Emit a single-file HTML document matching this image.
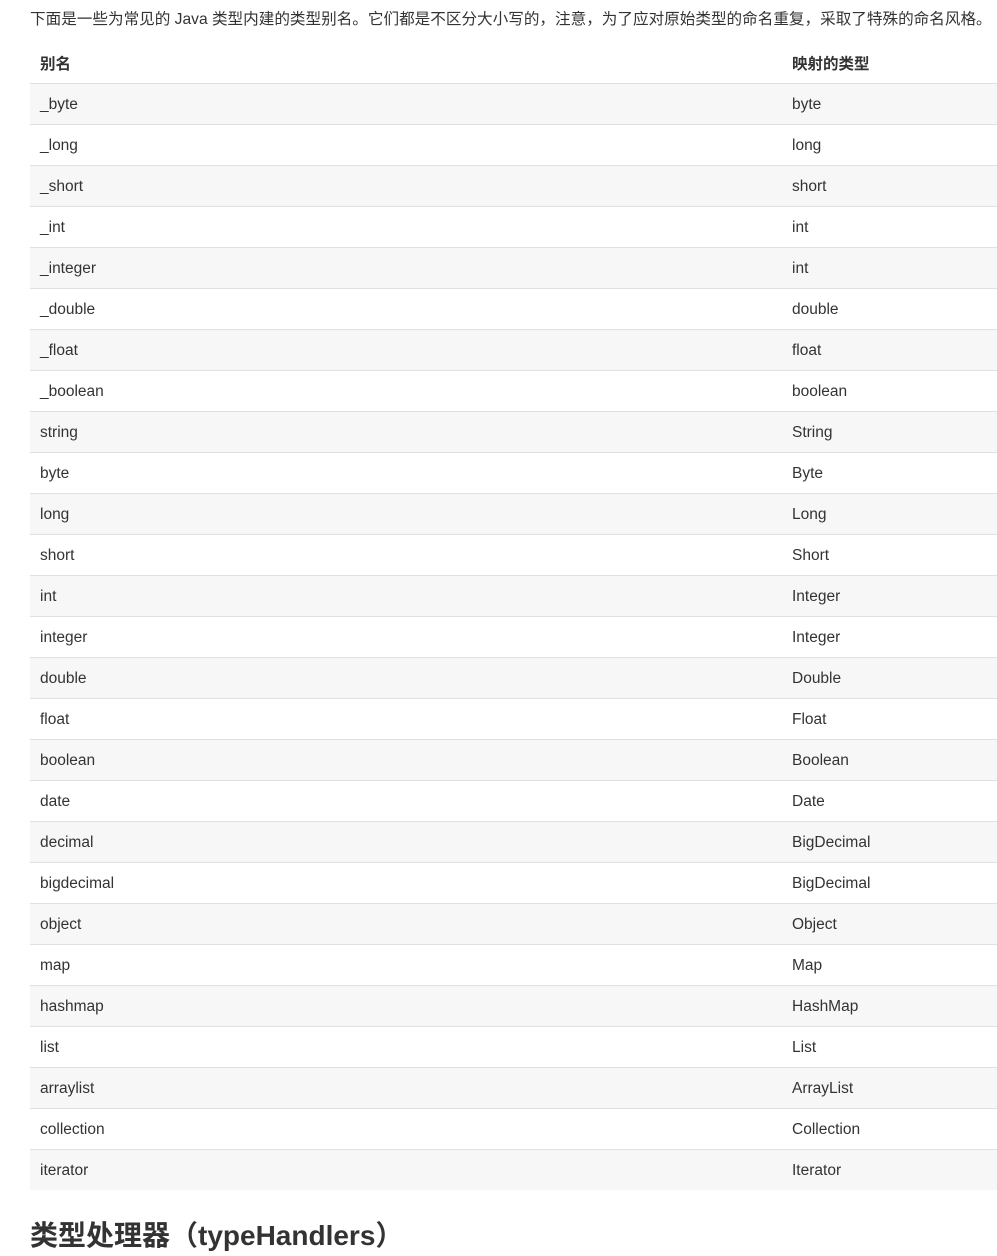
<!DOCTYPE html>
<html><head><meta charset="utf-8"><style>
html,body{margin:0;width:997px;height:1242px;overflow:hidden;background:#fff;font-family:"Liberation Sans","Noto Sans CJK SC",sans-serif;color:#333;}
p{position:absolute;left:30px;top:8px;margin:0;font-size:15.6px;line-height:24px;white-space:nowrap;}
table{position:absolute;left:30px;top:42px;width:967px;border-collapse:collapse;font-size:15.5px;table-layout:fixed;}
td,th{height:40px;padding:2px 0 0 10px;text-align:left;border-top:1px solid #e0e0e0;box-sizing:border-box;}
td{height:41px;}
th{border-top:none;font-weight:bold;height:41px;}
tr:nth-child(even) td{background:#f7f7f7;}
td:first-child,th:first-child{width:752px;}
h2{position:absolute;left:30px;top:1216px;margin:0;font-size:28px;line-height:40px;font-weight:bold;}
</style></head><body>
<p>下面是一些为常见的 Java 类型内建的类型别名。它们都是不区分大小写的，注意，为了应对原始类型的命名重复，采取了特殊的命名风格。</p>
<table>
<tr><th>别名</th><th>映射的类型</th></tr>
<tr><td>_byte</td><td>byte</td></tr>
<tr><td>_long</td><td>long</td></tr>
<tr><td>_short</td><td>short</td></tr>
<tr><td>_int</td><td>int</td></tr>
<tr><td>_integer</td><td>int</td></tr>
<tr><td>_double</td><td>double</td></tr>
<tr><td>_float</td><td>float</td></tr>
<tr><td>_boolean</td><td>boolean</td></tr>
<tr><td>string</td><td>String</td></tr>
<tr><td>byte</td><td>Byte</td></tr>
<tr><td>long</td><td>Long</td></tr>
<tr><td>short</td><td>Short</td></tr>
<tr><td>int</td><td>Integer</td></tr>
<tr><td>integer</td><td>Integer</td></tr>
<tr><td>double</td><td>Double</td></tr>
<tr><td>float</td><td>Float</td></tr>
<tr><td>boolean</td><td>Boolean</td></tr>
<tr><td>date</td><td>Date</td></tr>
<tr><td>decimal</td><td>BigDecimal</td></tr>
<tr><td>bigdecimal</td><td>BigDecimal</td></tr>
<tr><td>object</td><td>Object</td></tr>
<tr><td>map</td><td>Map</td></tr>
<tr><td>hashmap</td><td>HashMap</td></tr>
<tr><td>list</td><td>List</td></tr>
<tr><td>arraylist</td><td>ArrayList</td></tr>
<tr><td>collection</td><td>Collection</td></tr>
<tr><td>iterator</td><td>Iterator</td></tr>
</table>
<h2>类型处理器（typeHandlers）</h2>
</body></html>
